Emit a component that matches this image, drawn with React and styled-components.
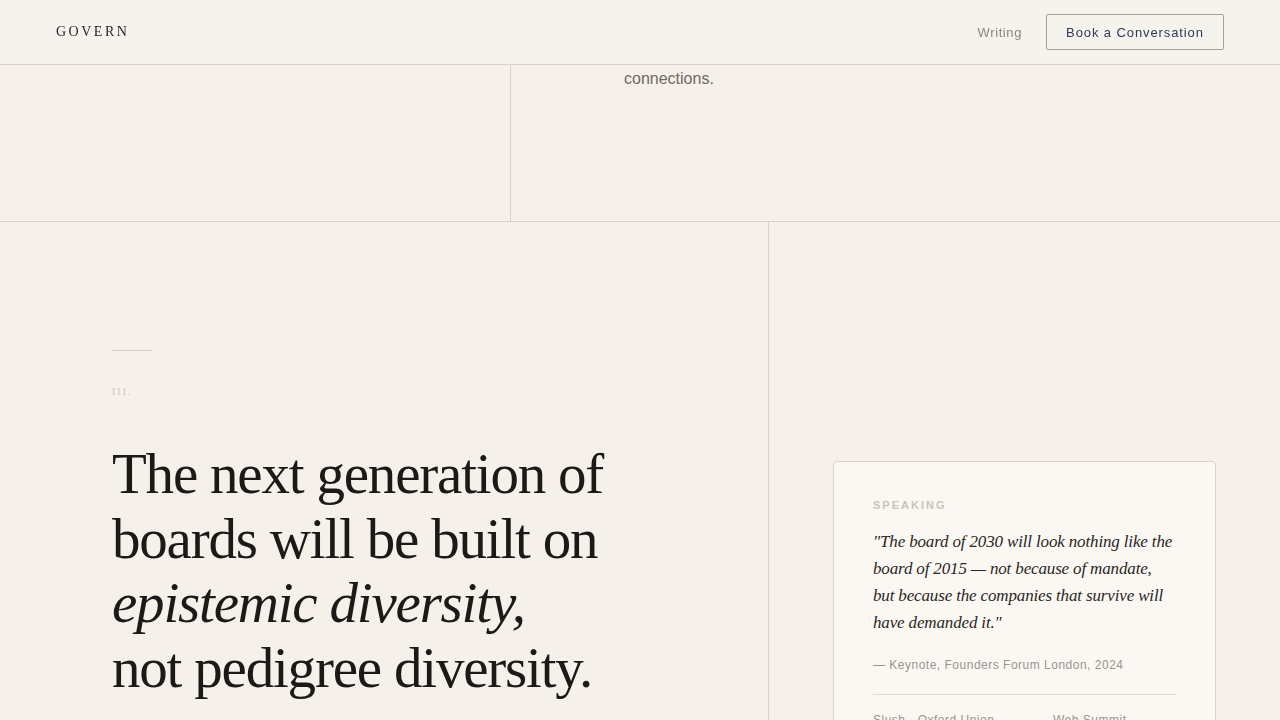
import React from 'react';
import styled, { createGlobalStyle } from 'styled-components';

const GlobalStyle = createGlobalStyle`
  html, body {
    margin: 0;
    padding: 0;
    background: #F6F0EA;
    overflow: hidden;
  }
  * { box-sizing: border-box; }
`;

const Page = styled.div`
  width: 1280px;
  height: 720px;
  overflow: hidden;
  position: relative;
  background: #F6F0EA;
`;

const Header = styled.header`
  position: absolute;
  top: 0;
  left: 0;
  right: 0;
  height: 65px;
  padding: 0 56px;
  display: flex;
  align-items: center;
  justify-content: space-between;
  background: rgba(245, 242, 236, 0.96);
  backdrop-filter: blur(12px);
  border-bottom: 1px solid #D9D3CB;
  z-index: 10;
`;

const Logo = styled.div`
  font-family: 'Liberation Serif', serif;
  font-size: 14px;
  letter-spacing: 2.5px;
  color: #2A2724;
`;

const Nav = styled.nav`
  display: flex;
  align-items: center;
  gap: 24px;
`;

const NavLink = styled.a`
  font-family: 'Liberation Sans', sans-serif;
  font-size: 13px;
  letter-spacing: 0.6px;
  color: #8A8580;
  text-decoration: none;
`;

const CtaButton = styled.button`
  font-family: 'Liberation Sans', sans-serif;
  font-size: 13px;
  letter-spacing: 0.9px;
  color: #2E3A58;
  background: transparent;
  border: 1px solid #A5A09A;
  border-radius: 2px;
  height: 36px;
  width: 178px;
  padding: 0;
  cursor: pointer;
`;

const Section = styled.section`
  display: grid;
  grid-template-columns: ${p => p.$cols};
  border-bottom: ${p => (p.$divided ? '1px solid #D9D1C9' : 'none')};
  height: ${p => p.$height};
`;

const Column = styled.div`
  border-right: ${p => (p.$rule ? '1px solid #D9D1C9' : 'none')};
  padding: ${p => p.$pad || '0'};
  display: flex;
  flex-direction: column;
  justify-content: ${p => p.$justify || 'flex-start'};
`;

const Lead = styled.p`
  margin: 0;
  max-width: 360px;
  font-family: 'Liberation Sans', sans-serif;
  font-size: 16px;
  line-height: 29px;
  color: #6E6963;
`;

const ShortRule = styled.div`
  width: 40px;
  height: 1px;
  background: #D7CEC5;
`;

const Numeral = styled.div`
  margin-top: 35px;
  font-family: 'Liberation Serif', serif;
  font-size: 10px;
  letter-spacing: 2px;
  color: #CFC6BD;
`;

const Headline = styled.h1`
  margin: 45px 0 0;
  font-family: 'Liberation Serif', serif;
  font-weight: 400;
  font-size: 57px;
  line-height: 64.5px;
  letter-spacing: -1.2px;
  color: #1C1A19;

  em {
    font-style: italic;
  }
`;

const Card = styled.div`
  background: #FBF8F4;
  border: 1px solid #DAD2CA;
  border-radius: 4px;
  padding: 37px 39px 40px;
`;

const Eyebrow = styled.div`
  font-family: 'Liberation Sans', sans-serif;
  font-weight: 700;
  font-size: 11px;
  letter-spacing: 2px;
  color: #CBC3BB;
`;

const Quote = styled.blockquote`
  margin: 17px 0 0;
  font-family: 'Liberation Serif', serif;
  font-style: italic;
  font-size: 17px;
  line-height: 27px;
  letter-spacing: -0.15px;
  color: #2A2623;
`;

const Attribution = styled.div`
  margin-top: 22px;
  font-family: 'Liberation Sans', sans-serif;
  font-size: 12px;
  letter-spacing: 0.5px;
  color: #9A948E;
`;

const Divider = styled.div`
  height: 1px;
  background: #E3DCD5;
  margin: 22px 0 18px;
`;

const Events = styled.div`
  display: grid;
  grid-template-columns: 180px 1fr;
`;

const Event = styled.div`
  font-family: 'Liberation Sans', sans-serif;
  font-size: 12px;
  letter-spacing: 0.5px;
  color: #9A948E;
`;

export default function App() {
  return (
    <Page>
      <GlobalStyle />
      <Header>
        <Logo>GOVERN</Logo>
        <Nav>
          <NavLink href="#">Writing</NavLink>
          <CtaButton>Book a Conversation</CtaButton>
        </Nav>
      </Header>

      <Section $cols="511px 1fr" $height="222px" $divided>
        <Column $rule />
        <Column $pad="0 113px 128px" $justify="flex-end">
          <Lead>
            Most boards are assembled from the same rooms, the same schools, the same
            <br />
            connections.
          </Lead>
        </Column>
      </Section>

      <Section $cols="769px 1fr" $height="600px">
        <Column $rule $pad="128px 112px 0">
          <ShortRule />
          <Numeral>III.</Numeral>
          <Headline>
            The next generation of boards will be built on <em>epistemic diversity,</em>
            <br />
            not pedigree diversity.
          </Headline>
        </Column>
        <Column $pad="239px 64px 0">
          <Card>
            <Eyebrow>SPEAKING</Eyebrow>
            <Quote>
              "The board of 2030 will look nothing like the board of 2015 — not because of
              mandate, but because the companies that survive will have demanded it."
            </Quote>
            <Attribution>— Keynote, Founders Forum London, 2024</Attribution>
            <Divider />
            <Events>
              <Event>Slush · Oxford Union</Event>
              <Event>Web Summit</Event>
            </Events>
          </Card>
        </Column>
      </Section>
    </Page>
  );
}
